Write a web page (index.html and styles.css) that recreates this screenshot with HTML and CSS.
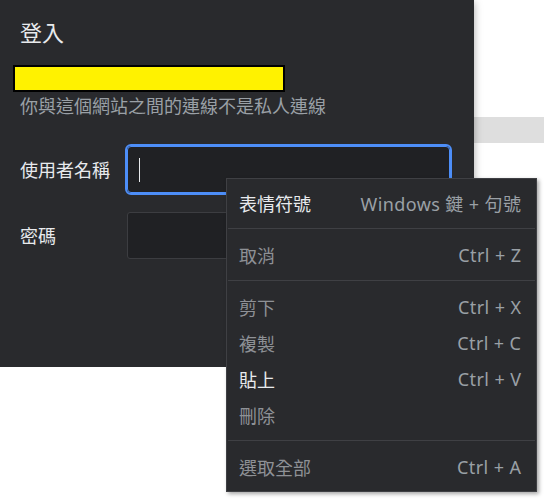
FILE: index.html
```html
<!DOCTYPE html>
<html lang="zh-Hant">
<head>
    <meta charset="UTF-8">
    <meta name="viewport" content="width=device-width, initial-scale=1.0">
    <title>登入</title>
    <link rel="stylesheet" href="styles.css">
</head>
<body>
    <div class="page">
        <!-- 登入對話框 -->
        <div class="dialog">
            <div class="dialog-title">登入</div>
            <div class="redacted"></div>
            <p class="subtitle">你與這個網站之間的連線不是私人連線</p>

            <div class="form">
                <label class="field-label">使用者名稱</label>
                <div class="field focused"><span class="caret"></span></div>

                <label class="field-label">密碼</label>
                <div class="field"></div>
            </div>
        </div>

        <!-- 後方網頁 -->
        <div class="behind">
            <div class="strip"></div>
        </div>
    </div>

    <!-- 右鍵選單 -->
    <div class="menu">
        <div class="menu-item active"><span>表情符號</span><span class="shortcut">Windows 鍵 + 句號</span></div>
        <div class="menu-sep"></div>
        <div class="menu-item"><span>取消</span><span class="shortcut">Ctrl + Z</span></div>
        <div class="menu-sep"></div>
        <div class="menu-item"><span>剪下</span><span class="shortcut">Ctrl + X</span></div>
        <div class="menu-item"><span>複製</span><span class="shortcut">Ctrl + C</span></div>
        <div class="menu-item active"><span>貼上</span><span class="shortcut">Ctrl + V</span></div>
        <div class="menu-item"><span>刪除</span><span class="shortcut"></span></div>
        <div class="menu-sep"></div>
        <div class="menu-item"><span>選取全部</span><span class="shortcut">Ctrl + A</span></div>
    </div>
</body>
</html>
```

FILE: styles.css
```css
body {
    margin: 0;
    background: #ffffff;
    font-family: "Noto Sans", "Noto Sans CJK TC", sans-serif;
}
.page {
    display: flex;
    align-items: flex-start;
}
.dialog {
    width: 474px;
    height: 367px;
    box-sizing: border-box;
    padding: 0 20px;
    background: #292a2d;
    color: #e8eaed;
    box-shadow: 0 2px 8px rgba(0, 0, 0, 0.35);
    position: relative;
    z-index: 1;
}
.dialog-title {
    font-size: 22px;
    line-height: 28px;
    margin-top: 18px;
}
.redacted {
    margin: 19px 0 0 -7px;
    width: 272px;
    height: 27px;
    box-sizing: border-box;
    background: #fff200;
    border: 2px solid #000000;
}
.subtitle {
    margin: 2px 0 0;
    font-size: 18px;
    line-height: 24px;
    color: #9aa0a6;
}
.form {
    display: grid;
    grid-template-columns: 107px 323px;
    row-gap: 19px;
    align-items: center;
    margin-top: 28px;
}
.field-label {
    font-size: 18px;
    line-height: 24px;
}
.field {
    height: 47px;
    box-sizing: border-box;
    background: #202124;
    border: 1px solid #3c3d41;
    border-radius: 3px;
    display: flex;
    align-items: center;
    padding-left: 11px;
}
.field.focused {
    border-color: #4d8ef8;
    outline: 2px solid #4d8ef8;
    border-radius: 4px;
}
.caret {
    width: 1px;
    height: 24px;
    background: #e8eaed;
}
.behind {
    flex: 1;
}
.strip {
    margin-top: 117px;
    height: 26px;
    background: #dedede;
}
.menu {
    position: absolute;
    left: 226px;
    top: 178px;
    width: 311px;
    box-sizing: border-box;
    padding: 6px 0;
    background: #292a2d;
    border: 1px solid #3f4044;
    box-shadow: 2px 2px 4px rgba(0, 0, 0, 0.35);
    z-index: 2;
}
.menu-item {
    height: 36px;
    display: flex;
    justify-content: space-between;
    align-items: center;
    padding: 0 15px 0 12px;
    font-size: 18px;
    color: #8e9196;
}
.menu-item.active {
    color: #e8eaed;
}
.shortcut {
    color: #9aa0a6;
    letter-spacing: 0.4px;
    margin-right: -0.4px;
}
.menu-sep {
    height: 1px;
    margin: 7px 1px 8px;
    background: #3f4044;
}
```
